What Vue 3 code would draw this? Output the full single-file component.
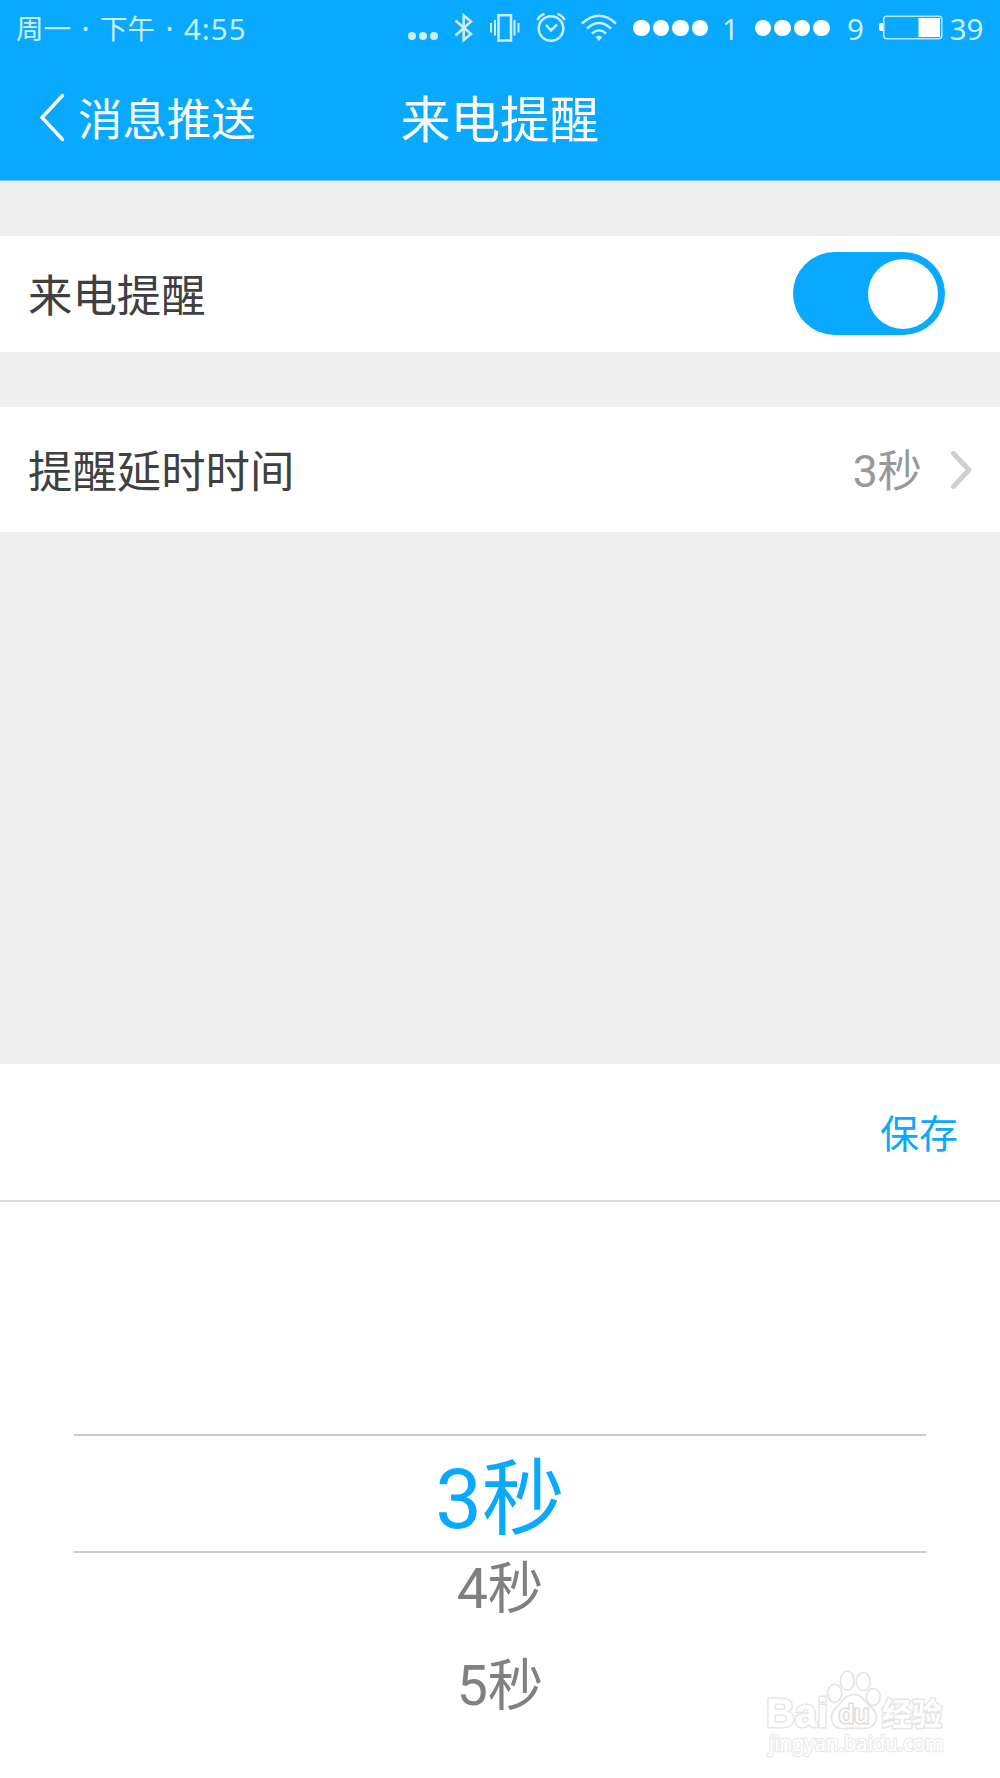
<template>
    <div class="page">
        <header class="header">
            <div class="statusBar">
                <div class="clock">
                    <span class="cn">周一</span>
                    <span class="sep">·</span>
                    <span class="cn">下午</span>
                    <span class="sep">·</span>
                    <span class="digits time">4:55</span>
                </div>
                <svg class="statusIcons" width="230" height="50" viewBox="0 0 230 50">
                    <g class="soft">
                        <circle cx="12" cy="36" r="4" />
                        <circle cx="23" cy="36" r="4" />
                        <circle cx="34" cy="36" r="4" />
                        <path d="M195.600 37 Q199 34.500 202.400 37 L199 41 Z" />
                    </g>
                    <g class="line">
                        <path d="M55.5 20.500 L71 34 L63.7 40 V15.500 L71 21.500 L55.500 35.500" />
                        <rect x="98.500" y="15.200" width="12.500" height="25.300" />
                        <path class="thin" d="M95 20 V35.500 M91 23 V32.500 M114.500 20 V35.500 M118.500 23 V32.500" />
                        <circle cx="151" cy="28.500" r="12.300" />
                        <path d="M146 25 L151 30.500 L157 24.500 M137.500 20 Q139 16 144.500 13.800 M164.500 20 Q163 16 157.500 13.800" />
                        <path d="M182 23.500 Q199 8 216 23.500 M187 28.500 Q199 17.500 211 28.500 M192 33.500 Q199 27 206 33.500" />
                    </g>
                </svg>
                <div class="signal first">
                    <i v-for="n in 4" :key="n"></i>
                </div>
                <span class="digits sim">1</span>
                <div class="signal second">
                    <i v-for="n in 4" :key="n"></i>
                </div>
                <span class="digits sim nine">9</span>
                <svg class="battery" width="66" height="26" viewBox="0 0 66 26">
                    <path class="cap" d="M5 8 H3 Q1 8 1 10 V14 Q1 16 3 16 H5 Z" />
                    <rect class="shell" x="5.800" y="1.200" width="58" height="22.600" rx="3" />
                    <rect class="level" x="40.500" y="3" width="21.500" height="19" />
                </svg>
                <span class="digits">{{ battery }}</span>
            </div>
            <div class="navBar">
                <button class="back">
                    <svg width="26" height="50" viewBox="0 0 26 50">
                        <path d="M23.500 2.500 L3 24.500 L23.500 46.500" />
                    </svg>
                    <span class="label">消息推送</span>
                </button>
                <h1>来电提醒</h1>
            </div>
        </header>

        <div class="row switchRow">
            <span class="label">来电提醒</span>
            <button class="toggle" :class="{ on: enabled }" @click="enabled = !enabled">
                <i></i>
            </button>
        </div>

        <div class="row delayRow">
            <span class="label">提醒延时时间</span>
            <div class="value">
                <span class="seconds">{{ saved }}秒</span>
                <svg width="24" height="40" viewBox="0 0 24 40">
                    <path d="M4.500 3.500 L20 20 L4.500 36.500" />
                </svg>
            </div>
        </div>

        <section class="sheet">
            <div class="sheetTop">
                <button class="save" @click="save">保存</button>
            </div>
            <div class="picker">
                <div class="selected">{{ selected }}秒</div>
                <div v-for="s in rest" :key="s" class="option" @click="selected = s">{{ s }}秒</div>
            </div>
        </section>

        <svg class="watermark" width="210" height="108" viewBox="-10 0 210 108">
            <text class="logo" x="6" y="57" textLength="62" lengthAdjust="spacingAndGlyphs">Bai</text>
            <ellipse cx="74.700" cy="23.300" rx="7" ry="9" />
            <ellipse cx="87.300" cy="10.700" rx="6.800" ry="9.500" />
            <ellipse cx="103.300" cy="11.700" rx="7" ry="9" />
            <ellipse cx="113.300" cy="27" rx="7" ry="8.500" />
            <path d="M94 24.500 C103 24.500 105 33 112 38 C120 45 117 59 103 58.500 C98 58 90 58 85 58.500 C71 60 68 46 75 39 C82 33 84 24.500 94 24.500 Z" />
            <text class="du" x="79" y="52.500" textLength="30" lengthAdjust="spacingAndGlyphs">du</text>
            <text class="jy" x="122" y="54.500" textLength="60" lengthAdjust="spacingAndGlyphs">经验</text>
            <text class="url" x="9" y="80.500" textLength="175" lengthAdjust="spacingAndGlyphs">jingyan.baidu.com</text>
        </svg>
    </div>
</template>

<script setup>
import { ref, computed } from 'vue'

const battery = ref(39)
const enabled = ref(true)
const saved = ref(3)
const selected = ref(3)

const rest = computed(() => [selected.value + 1, selected.value + 2])

const save = () => {
    saved.value = selected.value
}
</script>

<style>
body {
    margin: 0;
    background-color: #efefef;
}
</style>

<style scoped>
.page {
    position: relative;
    display: flex;
    flex-direction: column;
    width: 1000px;
    height: 1778px;
    overflow: hidden;
    background-color: #efefef;
    font-family: Roboto, "Noto Sans CJK SC", sans-serif;
    color: #404040;
}

button {
    border: none;
    padding: 0;
    background: transparent;
    font: inherit;
    color: inherit;
}

.header {
    height: 180px;
    border-bottom: 1px solid #7ac8f7;
    background-color: #09a9ff;
    color: #fff;
}

.statusBar {
    display: flex;
    align-items: center;
    height: 56px;
    padding-left: 16px;
    box-sizing: border-box;
    color: #ceeeff;
}

.clock {
    display: flex;
    align-items: center;
    width: 384px;
}

.cn {
    padding-top: 4px;
    font-size: 27.5px;
    line-height: 52px;
}

.sep {
    width: 29px;
    padding-top: 2px;
    text-align: center;
    font-family: "Noto Sans", sans-serif;
    font-size: 30px;
    line-height: 54px;
}

.digits {
    padding-top: 2px;
    font-family: "Noto Sans", sans-serif;
    font-size: 29.500px;
    line-height: 54px;
}

.time {
    letter-spacing: 1px;
}

.statusIcons {
    flex: none;
    align-self: flex-start;
}

.soft {
    fill: #ceeeff;
}

.line {
    fill: none;
    stroke: #ceeeff;
    stroke-width: 2.500;
}

.thin {
    stroke-width: 2;
}

.signal {
    display: flex;
    gap: 3px;
}

.signal.first {
    margin-left: 3px;
}

.signal.second {
    margin-left: 16px;
}

.signal i {
    width: 16.500px;
    height: 16.500px;
    border-radius: 50%;
    background-color: #fff;
}

.sim {
    margin-left: 14px;
}

.sim.nine {
    margin-left: 17px;
}

.battery {
    flex: none;
    margin: 0 6px 0 14px;
}

.cap, .level {
    fill: #fff;
}

.shell {
    fill: none;
    stroke: #b5e5ff;
    stroke-width: 1.6;
}

.navBar {
    display: grid;
    grid-template-columns: 1fr auto 1fr;
    align-items: center;
    height: 124px;
}

.back {
    display: flex;
    align-items: center;
    gap: 13px;
    padding-left: 39px;
    font-size: 44.4px;
    line-height: 60px;
}

.back path {
    fill: none;
    stroke: #fff;
    stroke-width: 3.4;
    stroke-linecap: round;
}

.label {
    padding-top: 6px;
}

h1 {
    margin: 0;
    padding-top: 6px;
    font-size: 49.600px;
    font-weight: 400;
    line-height: 60px;
}

.row {
    display: flex;
    align-items: center;
    justify-content: space-between;
    padding-left: 28px;
    background-color: #fff;
    font-size: 44.4px;
    line-height: 60px;
}

.switchRow {
    height: 116px;
    margin-top: 55px;
    padding-right: 55px;
}

.delayRow {
    height: 125px;
    margin-top: 55px;
    padding-right: 27px;
}

.toggle {
    display: flex;
    align-items: center;
    width: 152px;
    height: 83px;
    margin-bottom: 1px;
    padding: 0 7px;
    border-radius: 42px;
    background-color: #ccc;
}

.toggle.on {
    justify-content: flex-end;
    background-color: #09a9ff;
}

.toggle i {
    width: 70px;
    height: 70px;
    border-radius: 50%;
    background-color: #fff;
}

.value {
    display: flex;
    align-items: center;
    gap: 27px;
    color: #999;
}

.seconds {
    padding-top: 5px;
}

.value path {
    fill: none;
    stroke: #d0d0d0;
    stroke-width: 5;
    stroke-linecap: round;
    stroke-linejoin: round;
}

.sheet {
    flex: 1;
    margin-top: 532px;
    background-color: #fff;
}

.sheetTop {
    display: flex;
    align-items: center;
    justify-content: flex-end;
    height: 136px;
    padding-right: 42px;
    border-bottom: 2px solid #dcdcdc;
}

.save {
    padding-top: 6px;
    font-size: 39px;
    line-height: 60px;
    color: #09a9ff;
}

.picker {
    padding: 232px 74px 0;
    text-align: center;
}

.selected {
    height: 115px;
    border-top: 2px solid #c8caca;
    border-bottom: 2px solid #c8caca;
    font-size: 83px;
    line-height: 128px;
    color: #09a9ff;
}

.option {
    height: 97px;
    font-size: 55.5px;
    line-height: 73px;
    color: #808080;
}

.watermark {
    position: absolute;
    left: 750px;
    top: 1670px;
    fill: #fff;
    stroke: #e6e6e6;
    stroke-width: 1.8;
}

.watermark text {
    font-family: "Liberation Sans", sans-serif;
    font-weight: 700;
    paint-order: stroke;
    stroke-width: 3;
}

.watermark .logo {
    font-size: 40px;
}

.watermark .du {
    font-size: 26px;
    font-weight: 400;
    stroke: #dcdcdc;
}

.watermark .jy {
    font-family: "Noto Sans CJK SC", sans-serif;
    font-size: 31px;
}

.watermark .url {
    font-family: "Noto Sans", sans-serif;
    font-weight: 400;
    font-size: 21px;
    stroke: #ebebeb;
    stroke-width: 2.6;
}
</style>
